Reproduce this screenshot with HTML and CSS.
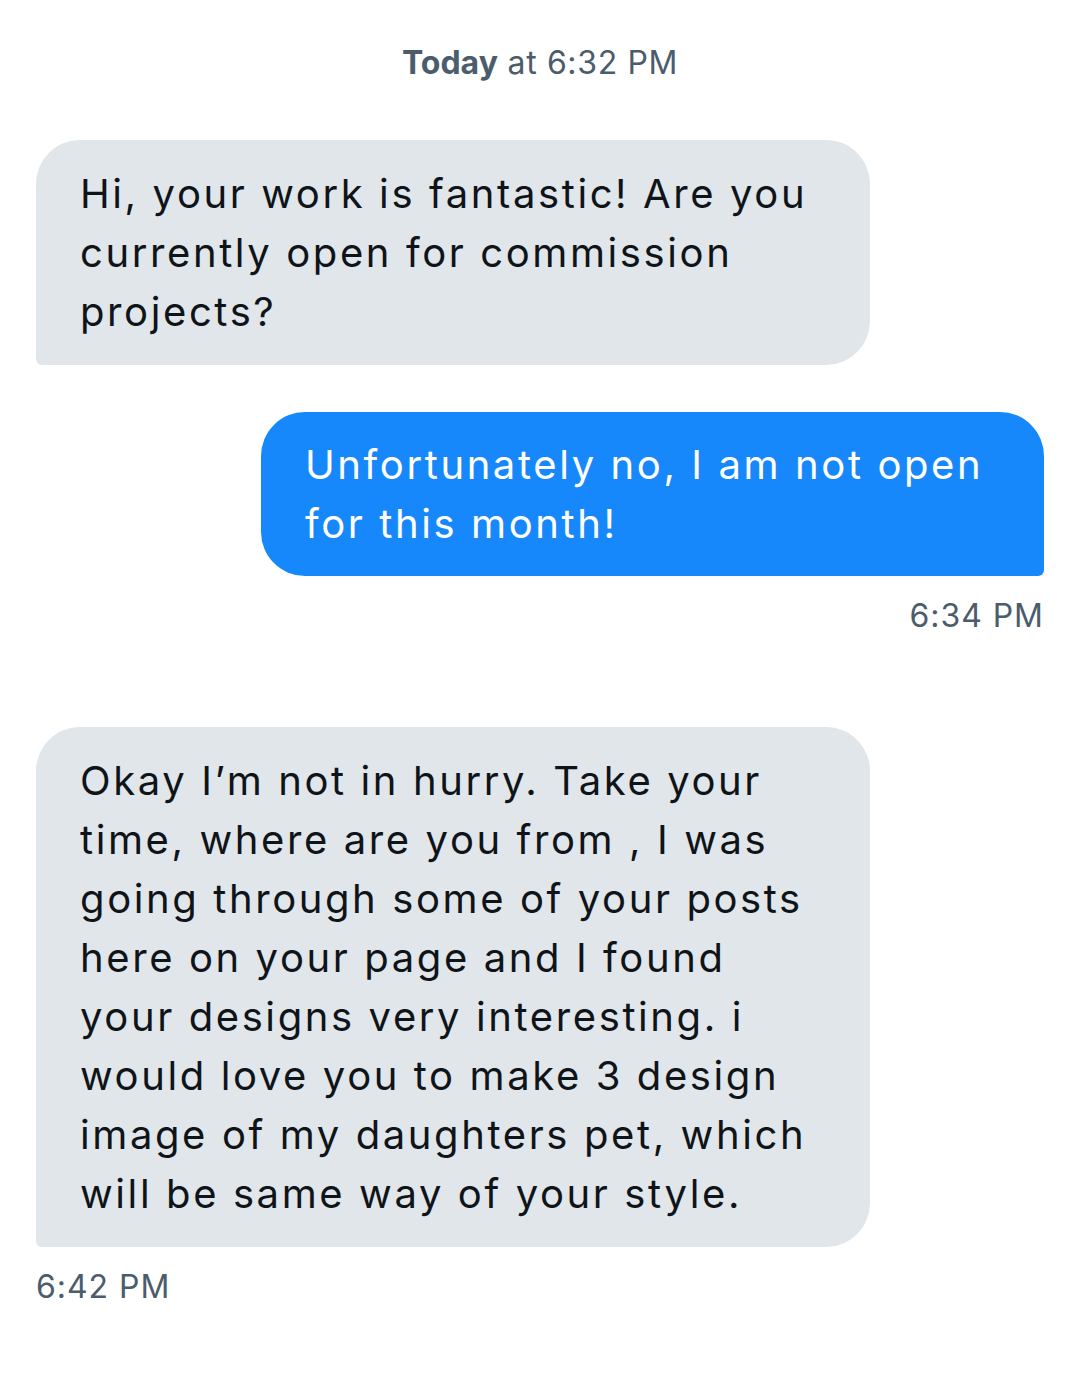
FILE: index.html
```html
<!DOCTYPE html>
<html lang="en">
<head>
    <meta charset="UTF-8">
    <meta name="viewport" content="width=device-width, initial-scale=1.0">
    <title>Messages</title>
    <link rel="stylesheet" href="styles.css">
</head>
<body>

    <div class="chat">
        <div class="day"><b>Today</b> at 6:32 PM</div>

        <div class="msg them first">
            <div class="bubble">Hi, your work is fantastic! Are you currently open for commission projects?</div>
        </div>

        <div class="msg me">
            <div class="bubble">Unfortunately no, I am not open for this month!</div>
            <div class="time">6:34 PM</div>
        </div>

        <div class="msg them">
            <div class="bubble">Okay I’m not in hurry. Take your time, where are you from , I was going through some of your posts here on your page and I found your designs very interesting. i would love you to make 3 design image of my daughters pet, which will be same way of your style.</div>
            <div class="time">6:42 PM</div>
        </div>
    </div>

</body>
</html>
```

FILE: styles.css
```css
body {
    margin: 0;
    background: #fff;
    font-family: Inter, "Liberation Sans", sans-serif;
    color: #0f1419;
}

.chat {
    display: flex;
    flex-direction: column;
    padding: 43px 36px 40px;
}

.day {
    text-align: center;
    font-size: 32px;
    line-height: 40px;
    letter-spacing: 0.02em;
    color: #4b5c6c;
}

.day b {
    font-weight: 700;
    letter-spacing: 0;
}

.msg {
    display: flex;
    flex-direction: column;
}

.msg.first {
    margin-top: 57px;
}

.msg.me {
    align-items: flex-end;
    margin-top: 47px;
}

.msg.them {
    align-items: flex-start;
}

.msg.me + .msg.them {
    margin-top: 91px;
}

.bubble {
    box-sizing: border-box;
    max-width: 834px;
    padding: 24px 44px;
    font-size: 40px;
    line-height: 59px;
    letter-spacing: 0.065em;
    border-radius: 44px;
}

.them .bubble {
    background: #e1e6ea;
    border-bottom-left-radius: 6px;
}

.me .bubble {
    max-width: 783px;
    padding-top: 23px;
    padding-bottom: 23px;
    background: #1688fc;
    color: #fff;
    border-bottom-right-radius: 6px;
}

.time {
    margin-top: 20px;
    font-size: 32px;
    line-height: 40px;
    letter-spacing: 0.03em;
    color: #4b5c6c;
}
```
